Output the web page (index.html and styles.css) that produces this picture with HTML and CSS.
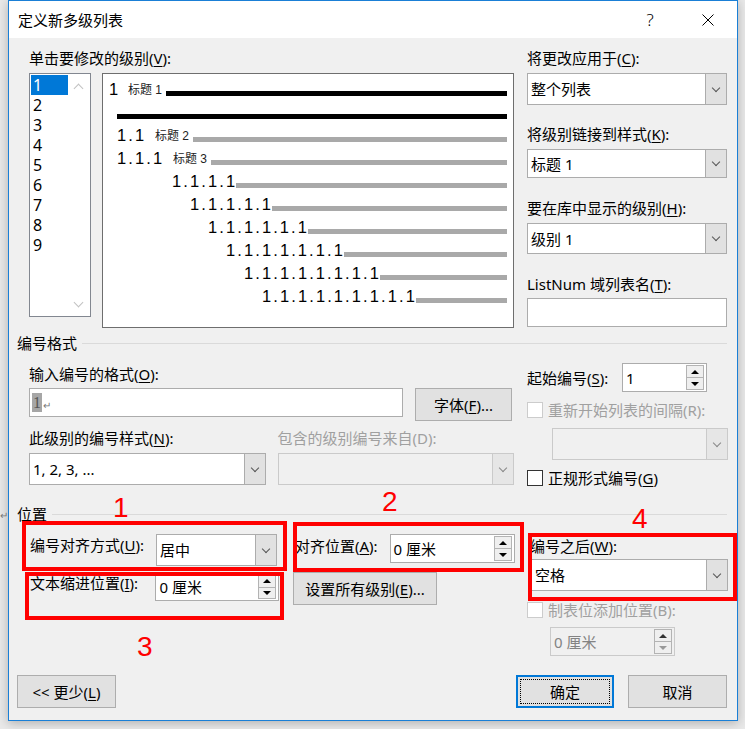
FILE: index.html
```html
<!DOCTYPE html>
<html lang="zh-CN">
<head>
  <meta charset="UTF-8">
  <title>定义新多级列表</title>
  <link rel="stylesheet" href="styles.css">
</head>
<body>

<div class="dlg">
  <div class="titlebar">
    <span class="title">定义新多级列表</span>
    <span class="tb-btn help">?</span>
    <span class="tb-btn">
      <svg width="12" height="12" viewBox="0 0 12 12"><path d="M0.5 0.5 L11.5 11.5 M11.5 0.5 L0.5 11.5" stroke="#000" stroke-width="1"/></svg>
    </span>
  </div>

  <div class="body">
    <div class="top">
      <div class="col-left">
        <div class="lbl">单击要修改的级别(<u>V</u>):</div>
        <div class="pick">
          <div class="levels">
            <ul>
              <li class="on">1</li>
              <li>2</li>
              <li>3</li>
              <li>4</li>
              <li>5</li>
              <li>6</li>
              <li>7</li>
              <li>8</li>
              <li>9</li>
            </ul>
            <div class="vscroll"><span class="chev up"></span><span class="chev down"></span></div>
          </div>
          <div class="preview">
            <div class="pv-row i1"><span class="num w19">1</span><span class="cap">标题 1</span><span class="bar dark"></span></div>
            <div class="pv-row i2"><span class="bar dark"></span></div>
            <div class="pv-row i2"><span class="num w38">1.1</span><span class="cap">标题 2</span><span class="bar"></span></div>
            <div class="pv-row i2"><span class="num w56">1.1.1</span><span class="cap">标题 3</span><span class="bar"></span></div>
            <div class="pv-row i5"><span class="num w64">1.1.1.1</span><span class="bar"></span></div>
            <div class="pv-row i6"><span class="num w82">1.1.1.1.1</span><span class="bar"></span></div>
            <div class="pv-row i7"><span class="num w100">1.1.1.1.1.1</span><span class="bar"></span></div>
            <div class="pv-row i8"><span class="num w118">1.1.1.1.1.1.1</span><span class="bar"></span></div>
            <div class="pv-row i9"><span class="num w136">1.1.1.1.1.1.1.1</span><span class="bar"></span></div>
            <div class="pv-row i10"><span class="num w154">1.1.1.1.1.1.1.1.1</span><span class="bar"></span></div>
          </div>
        </div>
      </div>

      <div class="col-right">
        <div class="lbl">将更改应用于(<u>C</u>):</div>
        <div class="select h32 mt5"><span class="val">整个列表</span><span class="drop"></span></div>
        <div class="lbl mt19">将级别链接到样式(<u>K</u>):</div>
        <div class="select h29 mt5"><span class="val">标题 1</span><span class="drop"></span></div>
        <div class="lbl mt20">要在库中显示的级别(<u>H</u>):</div>
        <div class="select h31 mt5"><span class="val">级别 1</span><span class="drop"></span></div>
        <div class="lbl mt20">ListNum 域列表名(<u>T</u>):</div>
        <div class="input h29 mt4"></div>
      </div>
    </div>

    <div class="sect-h mt5">编号格式</div>
    <div class="sect">
      <div class="col-left">
        <div class="lbl mt11">输入编号的格式(<u>O</u>):</div>
        <div class="row mt4">
          <div class="input fmt"><span class="hl">1</span><span class="ret">↵</span></div>
          <div class="btn font-btn">字体(<u>F</u>)...</div>
        </div>
        <div class="row gap12 mt7">
          <div class="lbl half">此级别的编号样式(<u>N</u>):</div>
          <div class="lbl half off">包含的级别编号来自(D):</div>
        </div>
        <div class="row gap12 mt5">
          <div class="select h32 half"><span class="val">1, 2, 3, ...</span><span class="drop"></span></div>
          <div class="select h32 half off"><span class="val"></span><span class="drop"></span></div>
        </div>
      </div>

      <div class="col-right">
        <div class="row center mt10">
          <div class="lbl start-lbl">起始编号(<u>S</u>):</div>
          <div class="spin start-spin"><span class="val">1</span><span class="arrows"><i class="up"></i><i class="dn"></i></span></div>
        </div>
        <div class="check off mt8"><span class="cb"></span>重新开始列表的间隔(R):</div>
        <div class="select h32 off restart mt8"><span class="val"></span><span class="drop"></span></div>
        <div class="check mt8"><span class="cb"></span>正规形式编号(<u>G</u>)</div>
      </div>
    </div>

    <div class="sect-h mt16">位置</div>
    <div class="sect pos mt10">
      <div class="col-a">
        <div class="row">
          <div class="lbl pos-lbl pt1">编号对齐方式(<u>U</u>):</div>
          <div class="select h32 align-sel"><span class="val">居中</span><span class="drop"></span></div>
        </div>
        <div class="row mt7">
          <div class="lbl pos-lbl">文本缩进位置(<u>I</u>):</div>
          <div class="spin indent-spin"><span class="val">0 厘米</span><span class="arrows"><i class="up"></i><i class="dn"></i></span></div>
        </div>
      </div>
      <div class="col-b">
        <div class="row">
          <div class="lbl at-lbl pt2">对齐位置(<u>A</u>):</div>
          <div class="spin at-spin"><span class="val">0 厘米</span><span class="arrows"><i class="up"></i><i class="dn"></i></span></div>
        </div>
        <div class="btn all-btn mt9">设置所有级别(<u>E</u>)...</div>
      </div>
      <div class="col-c">
        <div class="lbl after-lbl mt2">编号之后(<u>W</u>):</div>
        <div class="select h32 after-sel mt3"><span class="val">空格</span><span class="drop"></span></div>
        <div class="check off mt9"><span class="cb"></span>制表位添加位置(B):</div>
        <div class="spin off tab-spin mt7"><span class="val">0 厘米</span><span class="arrows"><i class="up"></i><i class="dn"></i></span></div>
      </div>
    </div>

    <div class="footer">
      <div class="btn less">&lt;&lt; 更少(<u>L</u>)</div>
      <div class="btn ok">确定</div>
      <div class="btn cancel">取消</div>
    </div>
  </div>
</div>

<!-- red annotations drawn over the screenshot -->
<div class="mark m1"></div>
<div class="mark m2"></div>
<div class="mark m3"></div>
<div class="mark m4"></div>
<span class="note n1">1</span>
<span class="note n2">2</span>
<span class="note n3">3</span>
<span class="note n4">4</span>
<span class="bg-ret">↵</span>

</body>
</html>
```

FILE: styles.css
```css
* {
  box-sizing: border-box;
}

body {
  margin: 0;
  width: 745px;
  height: 729px;
  overflow: hidden;
  position: relative;
  background: #e9e9e9;
  font-family: "Noto Sans", "Noto Sans CJK SC", sans-serif;
  font-size: 15px;
  line-height: 20px;
  color: #000;
}

u {
  text-decoration: underline;
  text-underline-offset: 2px;
}

.dlg {
  margin-left: 8px;
  width: 730px;
  height: 721px;
  border: 1px solid #1a7fd6;
  background: #f0f0f0;
  display: flex;
  flex-direction: column;
  box-shadow: 0 2px 10px rgba(0, 0, 0, 0.25);
}

/* title bar */
.titlebar {
  height: 37px;
  background: #fff;
  display: flex;
  align-items: center;
  padding-left: 9px;
}

.title {
  font-family: "Noto Sans CJK SC", sans-serif;
}

.tb-btn {
  width: 58px;
  height: 37px;
  display: flex;
  align-items: center;
  justify-content: center;
}

.help {
  margin-left: auto;
  font-size: 17px;
  font-weight: 300;
}

/* main body */
.body {
  flex: 1;
  display: flex;
  flex-direction: column;
  padding: 10px 10px 12px 8px;
}

.top, .sect {
  display: flex;
  align-items: flex-start;
  padding-left: 12px;
}

.col-left {
  width: 485px;
}

.col-right {
  width: 200px;
  margin-left: 13px;
}

.lbl {
  height: 20px;
  white-space: nowrap;
}

.lbl.off, .check.off {
  color: #a0a0a0;
}

.mt2 { margin-top: 2px; }
.mt3 { margin-top: 3px; }
.mt4 { margin-top: 4px; }
.mt5 { margin-top: 5px; }
.mt7 { margin-top: 7px; }
.mt8 { margin-top: 8px; }
.mt9 { margin-top: 9px; }
.mt10 { margin-top: 10px; }
.mt11 { margin-top: 11px; }
.mt16 { margin-top: 16px; }
.mt19 { margin-top: 19px; }
.mt20 { margin-top: 20px; }
.pt1 { padding-top: 1px; }
.pt2 { padding-top: 2px; }

.h29 { height: 29px; }
.h31 { height: 31px; }
.h32 { height: 32px; }

.row {
  display: flex;
  align-items: flex-start;
}

.row.center {
  align-items: center;
}

.gap12 {
  gap: 12px;
}

.half {
  width: 237px;
}

/* level list and preview */
.pick {
  display: flex;
  gap: 11px;
  margin-top: 5px;
}

.levels {
  width: 62px;
  height: 244px;
  border: 1px solid #828790;
  background: #fff;
  display: flex;
  padding: 1px;
}

.levels ul {
  list-style: none;
  margin: 0;
  padding: 0;
  width: 37px;
}

.levels li {
  height: 20px;
  padding-left: 2px;
  font-size: 16px;
}

.levels li.on {
  background: #0078d7;
  color: #fff;
}

.vscroll {
  flex: 1;
  display: flex;
  flex-direction: column;
  justify-content: space-between;
  align-items: center;
  padding: 10px 0 9px;
}

.chev {
  width: 7px;
  height: 7px;
  border-left: 1px solid #c2c2c2;
  border-top: 1px solid #c2c2c2;
}

.chev.up {
  transform: rotate(45deg);
}

.chev.down {
  transform: rotate(225deg);
}

.preview {
  width: 412px;
  height: 255px;
  border: 1px solid #6e6e6e;
  background: #fff;
  padding: 1px 6px 0 0;
  font-family: "Liberation Sans", "Noto Sans CJK SC", sans-serif;
}

.pv-row {
  display: flex;
  align-items: flex-end;
  height: 23px;
}

.pv-row.i1 { padding-left: 6px; }
.pv-row.i2 { padding-left: 14px; }
.pv-row.i5 { padding-left: 69px; }
.pv-row.i6 { padding-left: 87px; }
.pv-row.i7 { padding-left: 105px; }
.pv-row.i8 { padding-left: 123px; }
.pv-row.i9 { padding-left: 141px; }
.pv-row.i10 { padding-left: 159px; }

.num {
  font-size: 16.5px;
  line-height: 18px;
  letter-spacing: 2.1px;
  color: #000;
  white-space: nowrap;
}

.w19 { width: 19px; }
.w38 { width: 38px; }
.w56 { width: 56px; }
.w64 { width: 64px; }
.w82 { width: 82px; }
.w100 { width: 100px; }
.w118 { width: 118px; }
.w136 { width: 136px; }
.w154 { width: 154px; }

.cap {
  width: 38px;
  font-size: 12px;
  line-height: 15px;
  color: #222;
  white-space: nowrap;
}

.bar {
  flex: 1;
  height: 5px;
  margin-bottom: 2px;
  background: #a9a9a9;
}

.bar.dark {
  background: #000;
}

/* form controls */
.select, .input, .spin {
  display: flex;
  border: 1px solid #acacac;
  background: #fff;
}

.select .val, .spin .val {
  flex: 1;
  display: flex;
  align-items: center;
  padding-left: 3px;
  white-space: nowrap;
}

.drop {
  width: 21px;
  background: #e1e1e1;
  border-left: 1px solid #acacac;
  display: flex;
  align-items: center;
  justify-content: center;
}

.drop::after {
  content: "";
  width: 5px;
  height: 5px;
  border-right: 1px solid #555;
  border-bottom: 1px solid #555;
  transform: rotate(45deg);
  margin-top: -3px;
}

.select.off {
  background: #f0f0f0;
  border-color: #cacaca;
}

.select.off .drop {
  background: #e6e6e6;
  border-left-color: #cacaca;
}

.select.off .drop::after {
  border-color: #888;
}

.arrows {
  width: 18px;
  display: flex;
  flex-direction: column;
  margin: 1px 2px 1px 0;
}

.arrows i {
  flex: 1;
  border: 1px solid #b3b3b3;
  background: #efefef;
  display: flex;
  align-items: center;
  justify-content: center;
}

.arrows i + i {
  border-top: 0;
}

.arrows .up::after, .arrows .dn::after {
  content: "";
  border-left: 4px solid transparent;
  border-right: 4px solid transparent;
}

.arrows .up::after {
  border-bottom: 4px solid #000;
}

.arrows .dn::after {
  border-top: 4px solid #000;
}

.spin.off {
  background: #f0f0f0;
  border-color: #cacaca;
  color: #838383;
}

.spin.off .arrows .up::after {
  border-bottom-color: #333;
}

.spin.off .arrows .dn::after {
  border-top-color: #999;
}

.btn {
  border: 1px solid #adadad;
  background: #e1e1e1;
  display: flex;
  align-items: center;
  justify-content: center;
  white-space: nowrap;
}

.check {
  display: flex;
  align-items: center;
  height: 20px;
  white-space: nowrap;
}

.cb {
  width: 16px;
  height: 16px;
  border: 1px solid #333;
  background: #fff;
  margin-right: 5px;
}

.check.off .cb {
  border-color: #cccccc;
}

/* numbering format section */
.sect-h {
  display: flex;
  align-items: center;
  gap: 5px;
  height: 20px;
}

.sect-h::after {
  content: "";
  flex: 1;
  height: 1px;
  background: #dadada;
}

.fmt {
  width: 374px;
  height: 29px;
  align-items: center;
  padding-left: 2px;
}

.hl {
  background: #a6a6a6;
  color: #555;
  font-family: "Liberation Serif", serif;
  font-size: 16px;
  height: 19px;
  line-height: 19px;
  padding: 0 1px;
}

.ret {
  font-size: 10px;
  color: #777;
  margin-left: 1px;
  margin-top: 4px;
}

.font-btn {
  width: 97px;
  height: 33px;
  margin-left: 12px;
}

.start-lbl {
  width: 95px;
}

.start-spin {
  width: 85px;
  height: 29px;
}

.restart {
  width: 176px;
  margin-left: 25px;
}

/* position section */
.col-a {
  width: 250px;
}

.pos-lbl {
  width: 127px;
  padding-left: 1px;
}

.align-sel {
  width: 121px;
}

.indent-spin {
  width: 124px;
  height: 28px;
}

.col-b {
  width: 222px;
  margin-left: 14px;
}

.at-lbl {
  width: 97px;
  padding-left: 2px;
}

.at-spin {
  width: 126px;
  height: 29px;
}

.all-btn {
  width: 144px;
  height: 33px;
}

.col-c {
  width: 200px;
  margin-left: 12px;
}

.after-lbl {
  padding-left: 3px;
}

.after-sel {
  width: 197px;
  margin-left: 4px;
}

.tab-spin {
  width: 125px;
  height: 29px;
  margin-left: 23px;
}

/* footer buttons */
.footer {
  margin-top: auto;
  display: flex;
}

.footer .btn {
  height: 33px;
}

.less {
  width: 99px;
}

.ok {
  width: 98px;
  margin-left: auto;
  border: 2px solid #0078d7;
  outline: 1px dotted #000;
  outline-offset: -5px;
}

.cancel {
  width: 99px;
  margin-left: 14px;
}

/* annotations */
.mark {
  position: absolute;
  border: 4px solid #ff0000;
}

.m1 { left: 22px; top: 521px; width: 265px; height: 50px; }
.m2 { left: 293px; top: 522px; width: 231px; height: 50px; }
.m3 { left: 25px; top: 572px; width: 259px; height: 48px; }
.m4 { left: 528px; top: 533px; width: 209px; height: 68px; }

.note {
  position: absolute;
  color: #ff0000;
  font-family: "Liberation Sans", sans-serif;
  font-size: 28px;
  line-height: 28px;
}

.n1 { left: 113px; top: 494px; }
.n2 { left: 382px; top: 488px; }
.n3 { left: 137px; top: 633px; }
.n4 { left: 632px; top: 505px; }

.bg-ret {
  position: absolute;
  left: 0;
  top: 505px;
  font-size: 10px;
  color: #777;
}
```
